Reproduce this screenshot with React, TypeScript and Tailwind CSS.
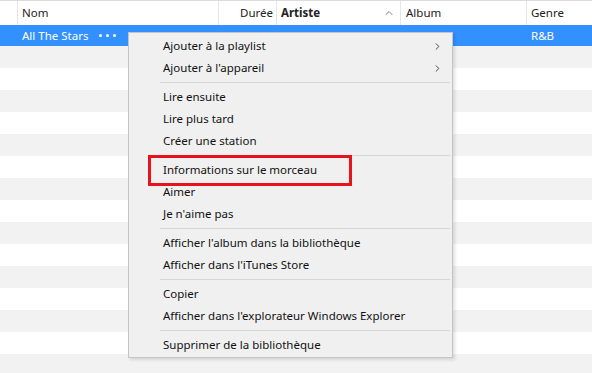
import { ChevronRight, ChevronUp } from "lucide-react";

const font = { fontFamily: '"Noto Sans", "Open Sans", sans-serif' };

type Item = { label: string; sub?: boolean } | "sep";

const menu: Item[] = [
    { label: "Ajouter à la playlist", sub: true },
    { label: "Ajouter à l'appareil", sub: true },
    "sep",
    { label: "Lire ensuite" },
    { label: "Lire plus tard" },
    { label: "Créer une station" },
    "sep",
    { label: "Informations sur le morceau" },
    { label: "Aimer" },
    { label: "Je n'aime pas" },
    "sep",
    { label: "Afficher l'album dans la bibliothèque" },
    { label: "Afficher dans l'iTunes Store" },
    "sep",
    { label: "Copier" },
    { label: "Afficher dans l'explorateur Windows Explorer" },
    "sep",
    { label: "Supprimer de la bibliothèque" },
];

function Row({ index }: { index: number }) {
    const bg = index % 2 === 0 ? "bg-[#f2f2f2]" : "bg-white";
    return <div className={`h-[22px] ${bg}`} />;
}

export default function App() {
    return (
        <div className="relative w-[592px] h-[373px] overflow-hidden bg-white text-[11.5px]" style={font}>
            {/* Header */}
            <div className="flex h-[25px] border-t border-[#dcdcdc] text-[#222] items-center">
                <div className="w-[18px] h-full border-r border-[#e6e6e6]" />
                <div className="w-[201px] h-full pl-[4px] flex items-center border-r border-[#e6e6e6]">Nom</div>
                <div className="w-[58px] h-full pr-[3px] flex items-center justify-end border-r border-[#e6e6e6]">Durée</div>
                <div className="w-[124px] h-full pl-[4px] pr-[4px] flex items-center justify-between border-r border-[#e6e6e6] font-bold">
                    <span>Artiste</span>
                    <ChevronUp size={12} strokeWidth={1.5} className="text-[#555] mr-[1px]" />
                </div>
                <div className="w-[126px] h-full pl-[5px] flex items-center border-r border-[#e6e6e6]">Album</div>
                <div className="flex-1 h-full pl-[4px] flex items-center">Genre</div>
            </div>

            {/* Selected row */}
            <div className="flex h-[21px] bg-[#3390ff] text-white items-center whitespace-nowrap">
                <div className="w-[18px]" />
                <div className="w-[201px] pl-[4px] flex items-center gap-[11px]">
                    <span>All The Stars</span>
                    <span className="flex gap-[4px]">
                        <span className="w-[3px] h-[3px] rounded-full bg-white" />
                        <span className="w-[3px] h-[3px] rounded-full bg-white" />
                        <span className="w-[3px] h-[3px] rounded-full bg-white" />
                    </span>
                </div>
                <div className="w-[58px] pr-[3px] text-right">3:57</div>
                <div className="w-[124px] pl-[4px] overflow-hidden">Kendrick Lamar &amp; SZA</div>
                <div className="w-[126px]" />
                <div className="flex-1 pl-[4px]">R&amp;B</div>
            </div>

            {Array.from({ length: 16 }).map((_, i) => (
                <Row key={i} index={i} />
            ))}

            {/* Context menu */}
            <div className="absolute left-[128px] top-[32px] w-[325px] bg-[#f0f0f0] border border-[#c4c4c4] shadow-[2px_2px_3px_rgba(0,0,0,0.12)] pt-[2px] pb-[1px] text-[#111] whitespace-nowrap">
                {menu.map((item, i) =>
                    item === "sep" ? (
                        <div key={i} className="h-[7px] flex items-center pl-[31px] pr-[2px]">
                            <div className="h-px w-full bg-[#d7d7d7]" />
                        </div>
                    ) : (
                        <div key={i} className="h-[22px] flex items-center pl-[34px] pr-[9px] justify-between">
                            <span>{item.label}</span>
                            {item.sub && <ChevronRight size={11} strokeWidth={1.75} className="text-[#222]" />}
                        </div>
                    )
                )}
            </div>

            {/* Highlight annotation */}
            <div className="absolute left-[148px] top-[155px] w-[204px] h-[31px] border-[3px] border-[#e8121a]" />
        </div>
    );
}
